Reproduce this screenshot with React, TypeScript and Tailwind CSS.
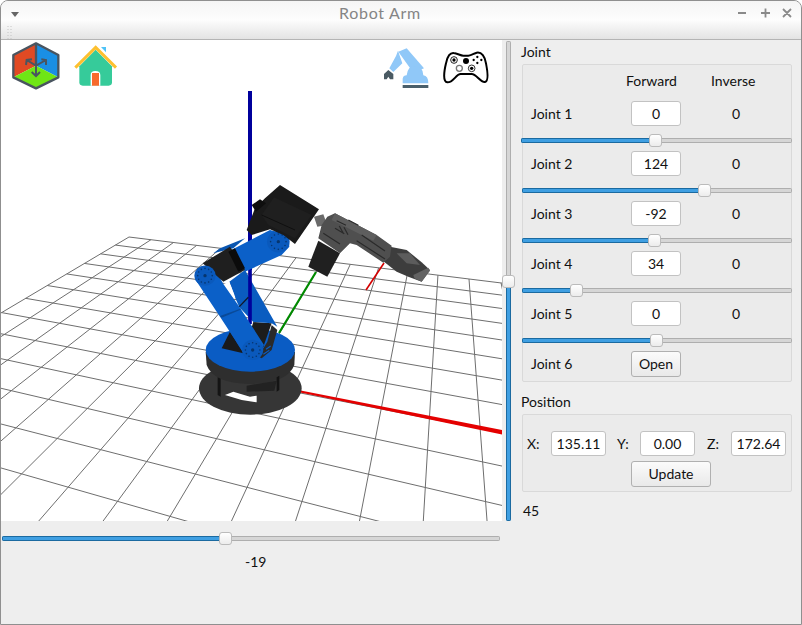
const joints = [
  { name: "Joint 1", value: "0", handle: 134 },
  { name: "Joint 2", value: "124", handle: 182 },
  { name: "Joint 3", value: "-92", handle: 132 },
  { name: "Joint 4", value: "34", handle: 54 },
  { name: "Joint 5", value: "0", handle: 134 },
]

function Slider({ handle, className = "" }: { handle: number; className?: string }) {
  return (
    <div className={`relative flex h-[13px] items-center ${className}`}>
      <div className="flex h-[5px] w-full overflow-hidden rounded-[2px]">
        <div
          className="border border-[#1b6aa0] bg-[#3f9fe2]"
          style={{ width: handle }}
        />
        <div className="flex-1 border border-[#aeaeae] bg-[#d6d6d6]" />
      </div>
      <div
        className="absolute top-0 h-[13px] w-[13px] rounded-[3px] border border-[#bbbbbb] bg-linear-to-b from-white to-[#ececec]"
        style={{ left: handle - 6 }}
      />
    </div>
  )
}

function Field({ value, className = "w-[50px]" }: { value: string; className?: string }) {
  return (
    <div className={`flex h-[25px] items-center justify-center rounded-[3px] border border-[#c2c2c2] bg-white ${className}`}>
      {value}
    </div>
  )
}

function Button({ label, className }: { label: string; className: string }) {
  return (
    <div className={`flex h-[26px] items-center justify-center rounded-[3px] border border-[#b0b0b0] bg-linear-to-b from-[#fbfbfb] to-[#e9e9e9] ${className}`}>
      {label}
    </div>
  )
}

// grid on the floor, from a homography fitted to four crossings in the picture
function floorProject() {
  const [x0, y0] = [129, 237]
  const [x1, y1] = [469, 279]
  const [x2, y2] = [485.6, 501.6]
  const [x3, y3] = [-90, 367]
  const dx1 = x1 - x2
  const dx2 = x3 - x2
  const sx = x0 - x1 + x2 - x3
  const dy1 = y1 - y2
  const dy2 = y3 - y2
  const sy = y0 - y1 + y2 - y3
  const det = dx1 * dy2 - dx2 * dy1
  const g = (sx * dy2 - dx2 * sy) / det
  const h = (dx1 * sy - sx * dy1) / det
  const a = x1 - x0 + g * x1
  const b = x3 - x0 + h * x3
  const d = y1 - y0 + g * y1
  const e = y3 - y0 + h * y3
  return (u: number, v: number) => {
    const s = u / 13
    const t = v / 10
    const w = g * s + h * t + 1
    return [(a * s + b * t + x0) / w, (d * s + e * t + y0) / w]
  }
}

function FloorGrid() {
  const p = floorProject()
  const lines: number[][] = []
  for (let u = 0; u <= 20; u++) lines.push([...p(u, 0), ...p(u, 17)])
  for (let v = 0; v <= 17; v++) lines.push([...p(0, v), ...p(20, v)])
  return (
    <g stroke="#6e6e6e" strokeWidth="1">
      {lines.map((l, i) => (
        <line key={i} x1={l[0]} y1={l[1]} x2={l[2]} y2={l[3]} />
      ))}
    </g>
  )
}

function Hub({ x, y, r }: { x: number; y: number; r: number }) {
  const dots = [0, 30, 60, 90, 120, 150, 180, 210, 240, 270, 300, 330]
  return (
    <g>
      <ellipse cx={x} cy={y} rx={r} ry={r * 0.95} fill="#0a59bc" />
      {dots.map((a) => (
        <circle
          key={a}
          cx={x + Math.cos((a * Math.PI) / 180) * r * 0.68}
          cy={y + Math.sin((a * Math.PI) / 180) * r * 0.68}
          r="2.4"
          fill="#06356e"
        />
      ))}
      <circle cx={x} cy={y} r="5" fill="#06356e" />
    </g>
  )
}

function Robot() {
  return (
    <g transform="translate(180 170) scale(0.3333)">
      {/* base */}
      <ellipse cx="211" cy="655" rx="154" ry="79" fill="#363636" />
      <path d="M135 675 L160 665 L210 680 L230 677 L230 697 L185 690Z" fill="#fff" />
      <path d="M77 545 L80 585 Q100 640 210 642 Q322 640 343 585 L345 545Z" fill="#2e2e2e" />
      <path d="M200 647 L290 632 L283 662 L200 665Z" fill="#222" />
      <path d="M113 622 L122 626 L122 680 L113 675Z M290 622 L298 617 L298 660 L290 665Z" fill="#141414" />
      <ellipse cx="211" cy="540" rx="134" ry="65" fill="#0a5cc4" />
      {/* mount */}
      <path d="M125 535 L150 485 L190 550Z" fill="#1a1a1a" />
      <path d="M220 456 L275 460 L250 530 L225 565 L190 550Z" fill="#1c1c1c" />
      <path d="M275 465 L292 480 L275 540 L245 565 L235 560 L262 515Z" fill="#2a2a2a" />
      <path d="M250 553 l18 -12 M258 538 l14 -10" stroke="#0a5cc4" strokeWidth="3.5" />
      {/* back plate, then the z axis in front of it */}
      <path d="M148 335 L195 300 L292 470 L275 460 L220 456 L178 412 L165 382Z" fill="#0a5cc0" />
      <path d="M130 342 L148 335 L166 382 L160 388Z" fill="#fff" />
      <line x1="210" y1="290" x2="210" y2="462" stroke="#00009c" strokeWidth="11" />
      {/* front plate */}
      <path d="M47 330 L100 288 L130 342 L178 410 L252 525 L230 560 L195 555 L120 440Z" fill="#0b60c8" />
      <path d="M120 438 L185 415 L180 420 L125 443Z" fill="#0a4a98" />
      <line x1="178" y1="410" x2="205" y2="382" stroke="#101828" strokeWidth="4" />
      <Hub x={218} y={540} r={32} />
      {/* upper arm */}
      <path d="M100 250 L120 235 L195 205 L160 235Z" fill="#0a56b0" />
      <path d="M158 238 L270 180 L325 195 L328 230 L305 255 L195 305 L175 260Z" fill="#0b60c8" />
      <path d="M68 280 L150 230 L195 300 L130 335Z" fill="#1f1f1f" />
      <path d="M145 245 L165 235 L195 295 L175 305Z" fill="#0b0b0b" />
      <Hub x={75} y={317} r={32} />
      <Hub x={295} y={215} r={34} />
      {/* gripper */}
      <path d="M402 140 L430 133 L442 165 L412 170Z" fill="#6a6a6a" />
      <path d="M630 230 L680 240 L725 277 L750 300 L725 335 L685 320 L650 305 L580 250Z" fill="#3d3d3d" />
      <path d="M650 250 L690 250 L720 285 L680 280Z" fill="#5c5c5c" />
      <path d="M700 315 L745 293 L750 302 L725 335 L703 325Z" fill="#636363" />
      <path d="M442 140 L465 130 L590 195 L635 227 L630 260 L610 278 L530 225 L510 220 L480 250 L415 205 L425 165Z" fill="#4f4f4f" />
      <path d="M465 130 L590 195 L580 212 L455 150Z" fill="#5e5e5e" />
      <path d="M470 152 l28 14 M465 175 l28 16 M478 168 l12 22 M492 172 l12 22 M505 150 l30 16 M545 195 l70 48 M530 212 l85 55 M430 190 l50 32" stroke="#2a2a2a" strokeWidth="3.500" />
      <path d="M415 212 L480 250 L442 320 L385 290Z" fill="#202020" />
      {/* servo */}
      <path d="M200 180 L225 115 L255 85 L300 45 L417 118 L345 222 L310 195 L270 178 L215 195Z" fill="#1a1a1a" />
      <path d="M245 135 L282 82 L395 135 L345 205 L265 165Z" fill="#1f1f1f" />
      <path d="M215 105 L240 88 L258 100 L228 125Z" fill="#0e0e0e" />
      <path d="M245 135 L345 180" stroke="#0f0f0f" strokeWidth="3" />
    </g>
  )
}

function CubeIcon() {
  return (
    <svg className="absolute top-0 left-[11px]" width="50" height="50" viewBox="36 120 150 150" fill="none">
      <path d="M108 197 L108 130 L40 165 L40 232Z" fill="#e04a24" />
      <path d="M108 197 L108 130 L175 165 L175 232Z" fill="#1a8fe4" />
      <path d="M108 197 L175 232 L108 265 L40 232Z" fill="#6fe615" />
      <path d="M108 130 L175 165 L175 232 L108 265 L40 232 L40 165Z M108 130 L108 197" stroke="#4a5560" strokeWidth="7" strokeLinejoin="round" />
      <path d="M108 197 L80 180 M108 197 L138 180 M108 197 L108 228 M78 195 L80 180 L96 178 M124 178 L138 180 L138 195 M95 216 L108 228 L120 216" stroke="#4a5560" strokeWidth="6" />
    </svg>
  )
}

function HouseIcon() {
  return (
    <svg className="absolute top-[3px] left-[71px]" width="48" height="44" viewBox="216 130 144 132" fill="none">
      <path d="M303 142 L318 142 L318 158Z" fill="#4fc3f7" />
      <path d="M238 200 L287 150 L336 200 L336 248 Q336 258 326 258 L248 258 Q238 258 238 248Z" fill="#36cb9a" />
      <path d="M272 258 L272 226 Q272 214 286 214 Q301 214 301 226 L301 258Z" fill="#fff" />
      <path d="M276 258 L276 220 L297 220 L297 258Z" fill="#f76a2c" />
      <path d="M226 204 L287 143 L348 204" stroke="#fdc02f" strokeWidth="9" />
    </svg>
  )
}

function ArmIcon() {
  return (
    <svg className="absolute top-[7px] left-[381px]" width="48" height="44" viewBox="36 141 144 132" fill="none">
      <path d="M85 155 L110 145 L162 205 L130 218Z" fill="#90c8f8" />
      <path d="M84 152 L97 190 L70 216 L58 205 L78 168Z" fill="#90c8f8" />
      <path d="M98 250 L98 236 Q100 226 110 226 Q113 198 135 198 Q160 200 160 226 Q175 228 175 250Z" fill="#90c8f8" />
      <rect x="98" y="255" width="77" height="9" fill="#4a5f6b" />
      <path d="M42 222 L55 210 L70 222 L70 238 L60 238 L55 230 L50 238 L42 238Z" fill="#4a5a63" />
    </svg>
  )
}

function PadIcon() {
  return (
    <svg className="absolute top-[10px] left-[441px]" width="48" height="34" viewBox="216 150 144 102">
      <path
        d="M255 160 C240 155 232 170 228 190 C222 215 218 245 232 247 C250 248 258 222 272 222 L305 222 C320 222 330 248 345 246 C358 243 352 210 348 190 C345 170 335 155 320 158 C312 160 305 167 295 167 L280 167 C272 167 265 162 255 160Z"
        fill="#fff"
        stroke="#000"
        strokeWidth="6"
      />
      <circle cx="252" cy="180" r="10" fill="none" stroke="#222" strokeWidth="3" />
      <circle cx="252" cy="180" r="5" fill="#000" />
      <circle cx="288" cy="183" r="9" fill="#000" />
      <circle cx="268" cy="205" r="9" fill="none" stroke="#777" strokeWidth="4" />
      <circle cx="305" cy="205" r="10" fill="none" stroke="#333" strokeWidth="3" />
      <circle cx="305" cy="205" r="5" fill="#000" />
      <circle cx="322" cy="171" r="3.5" fill="#000" />
      <circle cx="334" cy="180" r="3.5" fill="#000" />
      <circle cx="322" cy="189" r="3.5" fill="#000" />
      <circle cx="311" cy="180" r="3.5" fill="#000" />
    </svg>
  )
}

function Viewport() {
  return (
    <div className="relative h-[481px] w-[501px] overflow-hidden bg-white">
      <svg width="501" height="481" viewBox="1 40 501 481" className="block">
        <FloorGrid />
        <line x1="366" y1="290" x2="384" y2="263" stroke="#d40000" strokeWidth="1.6" />
        <line x1="250" y1="91" x2="250" y2="270" stroke="#00009c" strokeWidth="4" />
        <line x1="279" y1="333" x2="316" y2="272" stroke="#008a00" strokeWidth="2.2" />
        <path d="M293 389 L502 430 L502 434.500 L293 391Z" fill="#e40000" />
        <Robot />
      </svg>
      <CubeIcon />
      <HouseIcon />
      <ArmIcon />
      <PadIcon />
    </div>
  )
}

function TitleBar() {
  return (
    <div className="relative flex h-[39px] shrink-0 justify-center border-b border-[#b4b4b4] bg-linear-to-b from-[#f5f5f5] via-[#fdfdfd] to-[#e3e3e3] pt-[2px] pr-[42px] text-[16px] tracking-[0.7px] text-[#858585]">
      <div className="absolute top-[11px] left-[10px] h-0 w-0 border-x-[4px] border-t-[5px] border-x-transparent border-t-[#666]" />
      <svg className="absolute top-[24px] left-[6px]" width="5" height="15">
        <path d="M1 1v14M4 1v14" stroke="#c4c4c4" strokeDasharray="1 2" />
      </svg>
      Robot Arm
      <svg className="absolute top-[6px] right-[8px]" width="56" height="12" stroke="#8a8a8a" strokeWidth="1.8">
        <path d="M1 6h8M24 6h9M28.500 1.500v9M46 2l8 8M54 2l-8 8" />
      </svg>
    </div>
  )
}

function JointPanel() {
  return (
    <div className="h-[318px] rounded-[2px] border border-[#d9d9d9] bg-[#ebebeb]">
      <div className="mt-[6px] mb-[10px] flex h-[20px] items-center">
        <span className="ml-[103px] w-[50px]">Forward</span>
        <span className="ml-[35px]">Inverse</span>
      </div>
      {joints.map((joint, i) => (
        <div key={joint.name} className="mb-[4px]">
          <div className="grid grid-cols-[108px_50px_1fr] items-center">
            <span className="pl-[8px]">{joint.name}</span>
            <Field value={joint.value} />
            <span className="text-center">0</span>
          </div>
          <Slider handle={joint.handle} className={i === 0 ? "mt-[8px] -mr-[1px] -ml-[2px]" : "mt-[8px] -mx-px"} />
        </div>
      ))}
      <div className="grid grid-cols-[108px_50px_1fr] items-center">
        <span className="pl-[8px]">Joint 6</span>
        <Button label="Open" className="w-[50px]" />
      </div>
    </div>
  )
}

function PositionPanel() {
  return (
    <div className="h-[78px] rounded-[2px] border border-[#d9d9d9] bg-[#ebebeb] pt-[16px]">
      <div className="flex items-center pl-[4px]">
        <span className="w-[24px]">X:</span>
        <Field value="135.11" className="w-[55px]" />
        <span className="ml-[11px] w-[23px]">Y:</span>
        <Field value="0.00" className="w-[55px]" />
        <span className="ml-[12px] w-[24px]">Z:</span>
        <Field value="172.64" className="w-[55px]" />
      </div>
      <Button label="Update" className="mt-[5px] ml-[108px] w-[80px]" />
    </div>
  )
}

export default function App() {
  return (
    <div className="h-[625px] w-[802px] overflow-hidden rounded-t-[8px] border border-[#8f8f8f] bg-[#eeeeee] text-[14px] leading-[20px] text-[#111] [font-family:Lato,sans-serif]">
      <TitleBar />
      <div className="relative flex">
        <div className="w-[501px] shrink-0">
          <Viewport />
          <Slider handle={223} className="mt-[11px] ml-px w-[498px]" />
          <div className="mt-[7px] pl-[244px]">-19</div>
        </div>
        <div className="relative mt-px ml-[4px] flex h-[480px] w-[5px] flex-col overflow-hidden rounded-[2px]">
          <div className="h-[240px] border border-[#aeaeae] bg-[#d6d6d6]" />
          <div className="flex-1 border border-[#1b6aa0] bg-[#3f9fe2]" />
        </div>
        <div className="absolute top-[235px] left-[501px] h-[13px] w-[13px] rounded-[3px] border border-[#bbbbbb] bg-linear-to-b from-white to-[#ececec]" />
        <div className="ml-[11px] w-[270px]">
          <div className="mt-[2px] mb-[2px] -ml-px">Joint</div>
          <JointPanel />
          <div className="mt-[10px] mb-[2px] -ml-px">Position</div>
          <PositionPanel />
          <div className="mt-[9px] ml-[1px]">45</div>
        </div>
      </div>
    </div>
  )
}
